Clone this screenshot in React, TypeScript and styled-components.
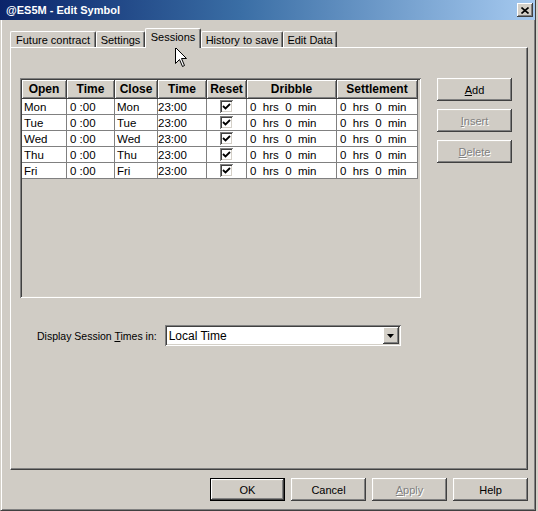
import React from "react";
import styled, { createGlobalStyle, css } from "styled-components";

const face = "#d4d0c8";
const paper = "#d0ccc5";
const shadow = "#808080";
const dark = "#404040";

const GlobalStyle = createGlobalStyle`
  body {
    margin: 0;
    background: ${face};
    font-family: "Liberation Sans", Arial, sans-serif;
    font-size: 11px;
    color: #000;
  }
`;

const raised = css`
  box-shadow: inset -1px -1px ${dark}, inset 1px 1px #fff,
    inset -2px -2px ${shadow}, inset 2px 2px ${face};
`;

const sunken = css`
  box-shadow: inset 1px 1px ${shadow}, inset -1px -1px #fff,
    inset 2px 2px ${dark}, inset -2px -2px ${face};
`;

const Dialog = styled.div`
  position: relative;
  width: 536px;
  height: 511px;
  box-sizing: border-box;
  display: flex;
  flex-direction: column;
  background: ${paper};
  border-left: 1px solid ${face};
  border-right: 1px solid ${dark};
  border-bottom: 1px solid ${dark};
  box-shadow: inset 1px 0 #fff, inset -1px -1px ${shadow};
`;

const TitleBar = styled.div`
  height: 20px;
  flex: none;
  display: flex;
  align-items: center;
  justify-content: space-between;
  padding: 0 2px 0 6px;
  margin-left: -1px;
  background: linear-gradient(to right, #0a246a 0%, #3a6ea5 45%, #a6caf0 100%);
  color: #fff;
  font-weight: bold;
  font-size: 11px;
`;

const CloseButton = styled.div`
  width: 16px;
  height: 14px;
  display: flex;
  align-items: center;
  justify-content: center;
  background: ${face};
  ${raised};
`;

const Body = styled.div`
  flex: 1;
  display: flex;
  flex-direction: column;
  padding: 8px 5px 0 9px;
`;

const TabStrip = styled.div`
  height: 19px;
  display: flex;
  align-items: flex-end;
`;

const Tab = styled.div<{ $width: number; $active?: boolean }>`
  box-sizing: border-box;
  width: ${(p) => p.$width}px;
  height: ${(p) => (p.$active ? 20 : 16)}px;
  margin-bottom: ${(p) => (p.$active ? -1 : 0)}px;
  position: relative;
  z-index: ${(p) => (p.$active ? 1 : 0)};
  display: flex;
  align-items: center;
  justify-content: center;
  padding-bottom: ${(p) => (p.$active ? 3 : 0)}px;
  background: ${paper};
  border-top: 1px solid #fff;
  border-left: 1px solid #fff;
  border-right: 1px solid ${dark};
  border-top-left-radius: 2px;
  border-top-right-radius: 2px;
  box-shadow: inset -1px 0 ${shadow};
  white-space: nowrap;
`;

const Panel = styled.div`
  box-sizing: border-box;
  width: 518px;
  height: 423px;
  padding: 30px 0 0 9px;
  border-top: 1px solid #fff;
  border-left: 1px solid #fff;
  border-right: 1px solid ${dark};
  border-bottom: 1px solid ${dark};
  box-shadow: inset -1px -1px ${shadow};
`;

const ContentRow = styled.div`
  display: flex;
  gap: 16px;
`;

const GridBox = styled.div`
  box-sizing: border-box;
  width: 401px;
  height: 220px;
  padding: 2px;
  ${sunken};
`;

const Grid = styled.div<{ $cols: string }>`
  display: grid;
  grid-template-columns: ${(p) => p.$cols};
  grid-auto-rows: 16px;
  grid-template-rows: 19px;
`;

const HeadCell = styled.div`
  box-sizing: border-box;
  display: flex;
  align-items: center;
  justify-content: center;
  font-weight: bold;
  font-size: 12px;
  background: ${face};
  border-right: 1px solid ${dark};
  border-bottom: 1px solid ${dark};
  box-shadow: inset 1px 1px #fff, inset -1px -1px ${shadow};
`;

const Cell = styled.div<{ $pad?: number; $center?: boolean }>`
  box-sizing: border-box;
  display: flex;
  align-items: center;
  justify-content: ${(p) => (p.$center ? "center" : "flex-start")};
  padding-left: ${(p) => p.$pad ?? 2}px;
  background: #fff;
  border-right: 1px solid ${shadow};
  border-bottom: 1px solid ${shadow};
  white-space: pre;
  font-size: 11.5px;
`;

const CheckBox = styled.span`
  width: 13px;
  height: 13px;
  display: flex;
  align-items: center;
  justify-content: center;
  background: #fff;
  ${sunken};
`;

const ButtonColumn = styled.div`
  display: flex;
  flex-direction: column;
  gap: 8px;
`;

const Button = styled.div<{ $disabled?: boolean; $default?: boolean }>`
  box-sizing: border-box;
  width: 75px;
  height: 23px;
  display: flex;
  align-items: center;
  justify-content: center;
  background: ${paper};
  ${raised};
  color: ${(p) => (p.$disabled ? shadow : "#000")};
  text-shadow: ${(p) => (p.$disabled ? "1px 1px 0 #fff" : "none")};
  ${(p) =>
    p.$default &&
    css`
      border: 1px solid #000;
    `}
`;

const Mnemonic = styled.span`
  text-decoration: underline;
`;

const ComboRow = styled.div`
  display: flex;
  align-items: center;
  gap: 8px;
  margin-top: 27px;
  padding-left: 17px;
`;

const ComboLabel = styled.span`
  font-size: 10.5px;
`;

const Combo = styled.div`
  box-sizing: border-box;
  width: 236px;
  height: 21px;
  padding: 2px;
  display: flex;
  align-items: center;
  justify-content: space-between;
  background: #fff;
  ${sunken};
`;

const ComboText = styled.span`
  padding-left: 2px;
  font-size: 12px;
`;

const ComboArrow = styled.div`
  width: 16px;
  height: 17px;
  display: flex;
  align-items: center;
  justify-content: center;
  background: ${face};
  ${raised};
`;

const Footer = styled.div`
  display: flex;
  justify-content: flex-end;
  gap: 6px;
  margin-top: 8px;
  width: 518px;
`;

const Cursor = styled.svg`
  position: absolute;
  left: 174px;
  top: 47px;
`;

const tabs = [
  { label: "Future contract", width: 86 },
  { label: "Settings", width: 49 },
  { label: "Sessions", width: 56, active: true },
  { label: "History to save", width: 82 },
  { label: "Edit Data", width: 54 },
];

const columns = [
  { title: "Open", width: 45 },
  { title: "Time", width: 48 },
  { title: "Close", width: 43 },
  { title: "Time", width: 49 },
  { title: "Reset", width: 40 },
  { title: "Dribble", width: 90 },
  { title: "Settlement", width: 81 },
];

const days = ["Mon", "Tue", "Wed", "Thu", "Fri"];

const Check = () => (
  <svg width="9" height="9" viewBox="0 0 9 9">
    <path d="M1 4 L3.5 6.5 L8 2" fill="none" stroke="#000" strokeWidth="1.8" />
  </svg>
);

export default function App() {
  return (
    <>
      <GlobalStyle />
      <Dialog>
        <TitleBar>
          <span>@ES5M - Edit Symbol</span>
          <CloseButton>
            <svg width="8" height="7" viewBox="0 0 8 7">
              <path d="M0.5 0.5 L7.5 6.5 M7.5 0.5 L0.5 6.5" stroke="#000" strokeWidth="1.6" />
            </svg>
          </CloseButton>
        </TitleBar>
        <Body>
          <TabStrip>
            {tabs.map((t) => (
              <Tab key={t.label} $width={t.width} $active={t.active}>
                {t.label}
              </Tab>
            ))}
          </TabStrip>
          <Panel>
            <ContentRow>
              <GridBox>
                <Grid $cols={columns.map((c) => `${c.width}px`).join(" ")}>
                  {columns.map((c, i) => (
                    <HeadCell key={i}>{c.title}</HeadCell>
                  ))}
                  {days.map((d) => (
                    <React.Fragment key={d}>
                      <Cell>{d}</Cell>
                      <Cell $pad={3}>0 :00</Cell>
                      <Cell>{d}</Cell>
                      <Cell $pad={0}>23:00</Cell>
                      <Cell $pad={0} $center>
                        <CheckBox>
                          <Check />
                        </CheckBox>
                      </Cell>
                      <Cell $pad={3}>0  hrs  0  min</Cell>
                      <Cell $pad={3}>0  hrs  0  min</Cell>
                    </React.Fragment>
                  ))}
                </Grid>
              </GridBox>
              <ButtonColumn>
                <Button>
                  <Mnemonic>A</Mnemonic>dd
                </Button>
                <Button $disabled>
                  <Mnemonic>I</Mnemonic>nsert
                </Button>
                <Button $disabled>
                  <Mnemonic>D</Mnemonic>elete
                </Button>
              </ButtonColumn>
            </ContentRow>
            <ComboRow>
              <ComboLabel>
                Display Session <Mnemonic>T</Mnemonic>imes in:
              </ComboLabel>
              <Combo>
                <ComboText>Local Time</ComboText>
                <ComboArrow>
                  <svg width="7" height="4" viewBox="0 0 7 4">
                    <path d="M0 0 H7 L3.5 4 Z" fill="#000" />
                  </svg>
                </ComboArrow>
              </Combo>
            </ComboRow>
          </Panel>
          <Footer>
            <Button $default>OK</Button>
            <Button>Cancel</Button>
            <Button $disabled>
              <Mnemonic>A</Mnemonic>pply
            </Button>
            <Button>Help</Button>
          </Footer>
        </Body>
        <Cursor width="13" height="21" viewBox="0 0 13 21">
          <path
            d="M0.5 0.5 V16.5 L4.5 12.5 L7.5 19.5 L9.5 18.5 L6.5 11.5 H11.5 Z"
            fill="#fff"
            stroke="#000"
            strokeWidth="1"
          />
        </Cursor>
      </Dialog>
    </>
  );
}
